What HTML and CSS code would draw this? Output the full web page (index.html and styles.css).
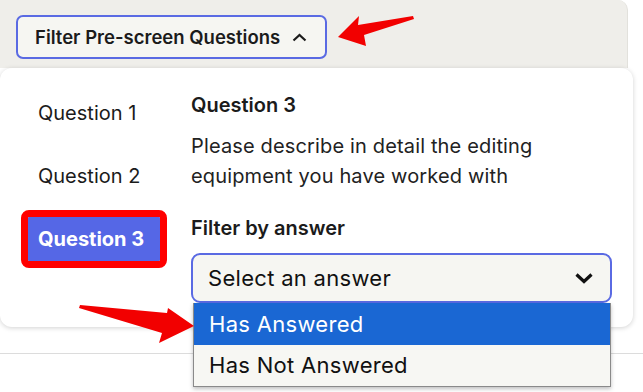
FILE: index.html
```html
<!DOCTYPE html>
<html lang="en">
<head>
    <meta charset="UTF-8">
    <title>Filter Pre-screen Questions</title>
    <link rel="stylesheet" href="styles.css">
</head>
<body>
    <div class="toolbar">
        <button class="filter-btn">
            Filter Pre-screen Questions
            <svg class="chev" width="15" height="9" viewBox="0 0 15 9"><path d="M1.5 7.5 L7.5 2 L13.5 7.5" fill="none" stroke="#1b1b1b" stroke-width="2.2"/></svg>
        </button>
    </div>

    <div class="popover">
        <ul class="q-nav">
            <li class="q-item">Question 1</li>
            <li class="q-item">Question 2</li>
            <li class="q-item active">Question 3</li>
        </ul>
        <div class="q-detail">
            <h3 class="q-title">Question 3</h3>
            <p class="q-text">Please describe in detail the editing equipment you have worked with</p>
            <div class="field-label">Filter by answer</div>
            <div class="select-wrap">
                <div class="select">
                    <span>Select an answer</span>
                    <svg width="20" height="12" viewBox="0 0 20 12"><path d="M2.5 2.5 L10 9.5 L17.5 2.5" fill="none" stroke="#111" stroke-width="3.2"/></svg>
                </div>
                <ul class="options">
                    <li class="option selected">Has Answered</li>
                    <li class="option">Has Not Answered</li>
                </ul>
            </div>
        </div>
    </div>

    <div class="divider"></div>

    <!-- annotation arrows -->
    <svg class="arrow arrow-top" width="90" height="40" viewBox="0 0 90 40">
        <polygon points="4,24 25,3 24,12 79,3 80,6 30,22 32,33" fill="#f20000"/>
    </svg>
    <svg class="arrow arrow-left" width="130" height="45" viewBox="0 0 130 45">
        <polygon points="4,5 91,13 92,8 118,26 83,43 86,33 3,8" fill="#f20000"/>
    </svg>
</body>
</html>
```

FILE: styles.css
```css
* {
    margin: 0;
    padding: 0;
    box-sizing: border-box;
}
body {
    font-family: Inter, 'Noto Sans', sans-serif;
    background: #ffffff;
    color: #1b1b1b;
    width: 643px;
    height: 392px;
    overflow: hidden;
    position: relative;
}
.toolbar {
    width: 628px;
    height: 68px;
    background: #efeeea;
    border-top-right-radius: 10px;
    border-right: 1px solid #e2e1dc;
    padding: 15px 0 0 16px;
}
.filter-btn {
    height: 44px;
    width: 311px;
    display: flex;
    align-items: center;
    gap: 12px;
    padding: 0 0 0 17px;
    border: 2px solid #5a6ae3;
    border-radius: 7px;
    background: #f6f6f2;
    font-family: inherit;
    font-size: 18.5px;
    font-weight: 600;
    color: #1b1b1b;
}
.popover {
    width: 633px;
    height: 259px;
    background: #fff;
    border-radius: 12px;
    box-shadow: 0 1px 5px rgba(0, 0, 0, 0.18);
    display: flex;
    padding: 23px 0 0 28px;
    position: relative;
    z-index: 1;
}
.q-nav {
    list-style: none;
    width: 163px;
    display: flex;
    flex-direction: column;
    gap: 19px;
}
.q-item {
    width: 132px;
    height: 44px;
    display: flex;
    align-items: center;
    padding-left: 10px;
    font-size: 20px;
    color: #1b1b1b;
}
.q-item.active {
    background: #5567e6;
    color: #fff;
    font-weight: 700;
    outline: 7px solid #ff0000;
    border-radius: 1px;
}
.q-detail {
    width: 421px;
    padding-top: 1px;
}
.q-title {
    font-size: 20px;
    font-weight: 600;
    line-height: 26px;
    margin-bottom: 13px;
}
.q-text {
    font-size: 20px;
    letter-spacing: 0.15px;
    line-height: 30px;
    color: #222;
    margin-bottom: 24px;
}
.field-label {
    font-size: 20px;
    font-weight: 600;
    line-height: 26px;
    margin-bottom: 12px;
}
.select-wrap {
    position: relative;
}
.select {
    height: 50px;
    border: 2px solid #5a6ae3;
    border-radius: 9px;
    background: #f6f6f2;
    display: flex;
    align-items: center;
    justify-content: space-between;
    padding: 0 16px 0 15px;
    font-size: 22px;
    letter-spacing: 0.3px;
    color: #111;
}
.options {
    list-style: none;
    position: absolute;
    top: 50px;
    left: 2px;
    width: 418px;
    border: 1px solid #8a8a8a;
    border-top: none;
    background: #f7f7f3;
    box-shadow: 0 2px 4px rgba(0, 0, 0, 0.25);
    z-index: 3;
}
.option {
    height: 41.5px;
    display: flex;
    align-items: center;
    padding-left: 15px;
    font-size: 22px;
    letter-spacing: 0.3px;
    color: #111;
}
.option.selected {
    background: #1a67d3;
    color: #fff;
}
.divider {
    margin-top: 26px;
    height: 1px;
    background: #dcdcdc;
}
.arrow {
    position: absolute;
    z-index: 2;
}
.arrow-top {
    left: 334px;
    top: 13px;
}
.arrow-left {
    left: 76px;
    top: 300px;
}
```
